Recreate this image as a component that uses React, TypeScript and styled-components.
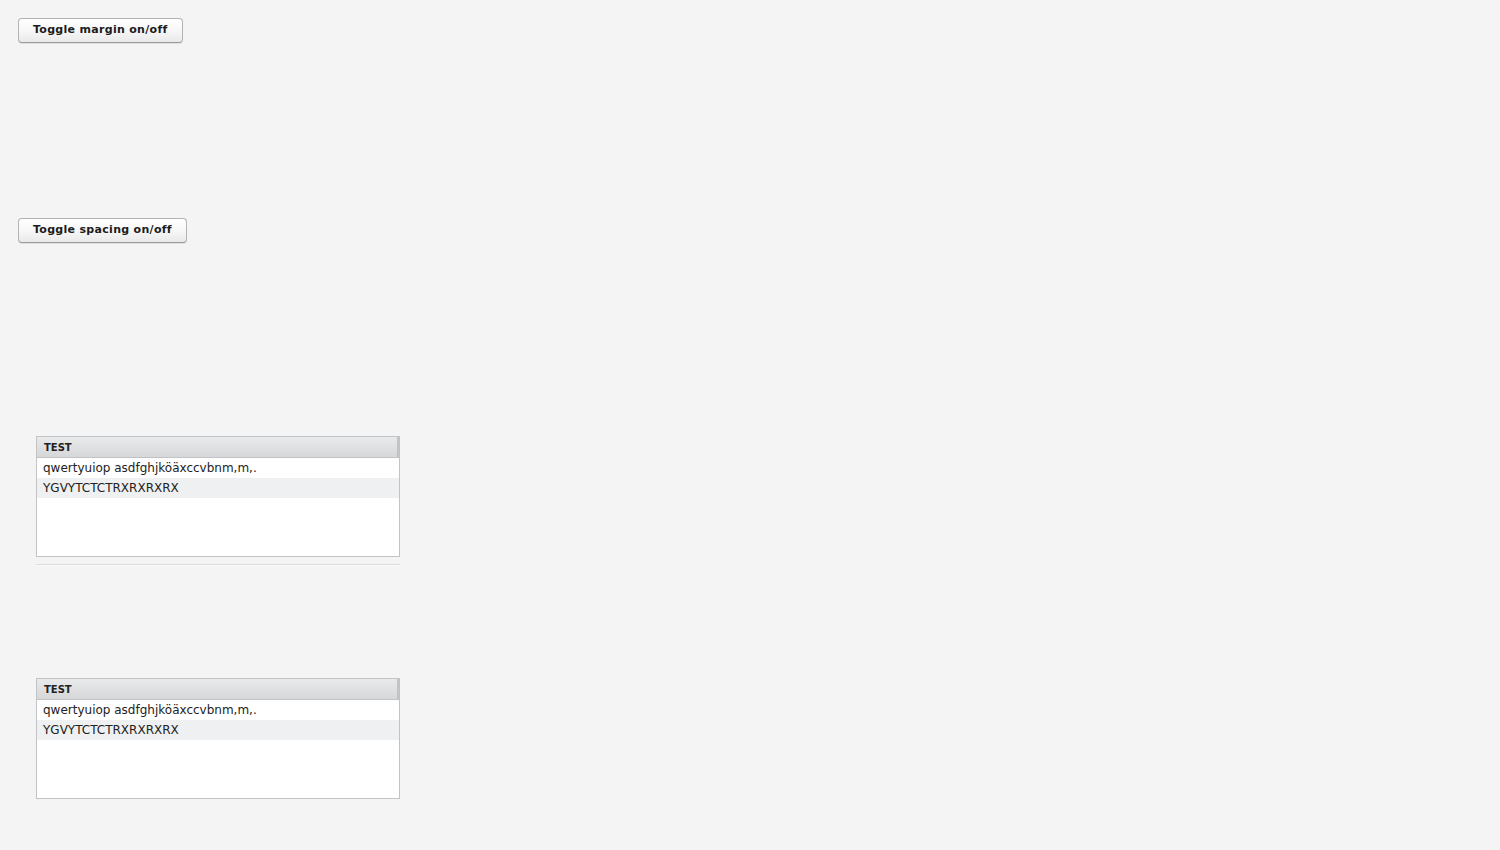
import React from 'react';
import styled, { createGlobalStyle } from 'styled-components';

const GlobalStyle = createGlobalStyle`
  html, body {
    margin: 0;
    padding: 0;
    background: #f4f4f4;
    font-family: "DejaVu Sans", Verdana, sans-serif;
    color: #222;
  }
`;

const Page = styled.div`
  display: flex;
  flex-direction: column;
  align-items: flex-start;
  padding: 18px;
  width: 1500px;
  height: 850px;
  box-sizing: border-box;
`;

const ButtonSlot = styled.div`
  height: 200px;
`;

const Button = styled.button`
  height: 25px;
  padding: 0 14px 2px;
  border: 1px solid #b3b3b3;
  border-bottom-color: #999;
  border-radius: 4px;
  background: linear-gradient(to bottom, #ffffff 0%, #f7f7f7 50%, #e9e9e9 100%);
  box-shadow: 0 1px 0 rgba(0, 0, 0, 0.08);
  font-family: "DejaVu Sans", Verdana, sans-serif;
  font-size: 11px;
  font-weight: bold;
  letter-spacing: 0.3px;
  color: #1b1b1b;
  cursor: pointer;
`;

const Inner = styled.div`
  display: flex;
  flex-direction: column;
  padding: 18px;
`;

const Table = styled.div`
  width: 364px;
  height: 121px;
  box-sizing: border-box;
  border: 1px solid #c2c3c4;
  background: #fff;
  display: flex;
  flex-direction: column;
`;

const Header = styled.div`
  height: 21px;
  box-sizing: border-box;
  display: flex;
  align-items: center;
  padding-left: 7px;
  background: linear-gradient(to bottom, #e9eaeb 0%, #d6d7d9 100%);
  border-bottom: 1px solid #c2c3c4;
  border-right: 2px solid #c2c3c4;
  font-size: 10px;
  font-weight: bold;
  color: #222;
`;

const Row = styled.div<{ $odd?: boolean }>`
  height: 20px;
  display: flex;
  align-items: center;
  padding-left: 6px;
  font-size: 12px;
  color: #222;
  background: ${(p) => (p.$odd ? '#eff0f1' : '#fff')};
`;

const Separator = styled.div`
  width: 364px;
  margin-top: 7px;
  border-top: 1px solid #dcdcdc;
  border-bottom: 1px solid #fafafa;
`;

const Gap = styled.div`
  height: 112px;
`;

function TestTable() {
  return (
    <Table>
      <Header>TEST</Header>
      <Row>qwertyuiop asdfghjköäxccvbnm,m,.</Row>
      <Row $odd>YGVYTCTCTRXRXRXRX</Row>
    </Table>
  );
}

export default function App() {
  return (
    <>
      <GlobalStyle />
      <Page>
        <ButtonSlot>
          <Button>Toggle margin on/off</Button>
        </ButtonSlot>
        <ButtonSlot>
          <Button>Toggle spacing on/off</Button>
        </ButtonSlot>
        <Inner>
          <TestTable />
          <Separator />
          <Gap />
          <TestTable />
        </Inner>
      </Page>
    </>
  );
}
